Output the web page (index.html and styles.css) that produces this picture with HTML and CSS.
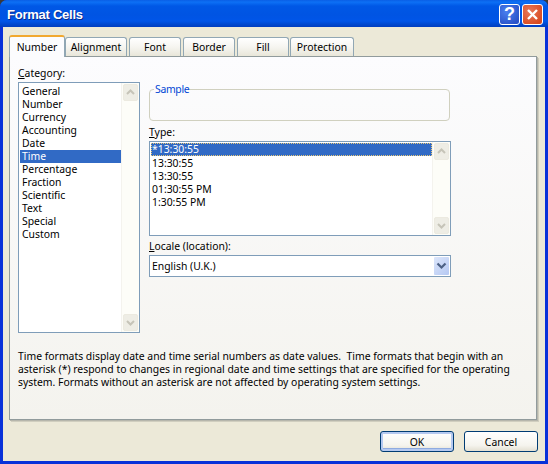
FILE: index.html
```html
<!DOCTYPE html>
<html lang="en">
<head>
<meta charset="utf-8">
<title>Format Cells</title>
<link rel="stylesheet" href="styles.css">
</head>
<body>
<div class="window">
  <header class="titlebar">
    <span class="title">Format Cells</span>
    <div class="caption-buttons">
      <span class="cap cap-help">?</span>
      <span class="cap cap-close"><svg width="13" height="13" viewBox="0 0 13 13"><path d="M2 2l9 9M11 2l-9 9" stroke="#fff" stroke-width="2.4" fill="none"/></svg></span>
    </div>
  </header>
  <div class="client">
    <div class="tabs">
      <span class="tab tab-active tab-number">Number</span>
      <span class="tab tab-alignment">Alignment</span>
      <span class="tab tab-font">Font</span>
      <span class="tab tab-border">Border</span>
      <span class="tab tab-fill">Fill</span>
      <span class="tab tab-protection">Protection</span>
    </div>
    <div class="pane">
      <div class="columns">
        <div class="col-left">
          <div class="label"><u>C</u>ategory:</div>
          <div class="listbox listbox-category">
            <ul class="items">
              <li>General</li><li>Number</li><li>Currency</li><li>Accounting</li><li>Date</li>
              <li class="selected">Time</li>
              <li>Percentage</li><li>Fraction</li><li>Scientific</li><li>Text</li><li>Special</li><li>Custom</li>
            </ul>
            <div class="scrollbar">
              <span class="sb-btn"><svg width="9" height="7" viewBox="0 0 9 7"><path d="M1 5l3.5-3.5L8 5" stroke="#c6c4b8" stroke-width="2" fill="none"/></svg></span>
              <span class="sb-btn"><svg width="9" height="7" viewBox="0 0 9 7"><path d="M1 2l3.5 3.5L8 2" stroke="#c6c4b8" stroke-width="2" fill="none"/></svg></span>
            </div>
          </div>
        </div>
        <div class="col-right">
          <fieldset class="sample"><legend>Sample</legend></fieldset>
          <div class="label label-type"><u>T</u>ype:</div>
          <div class="listbox listbox-type">
            <ul class="items">
              <li class="selected focused">*13:30:55</li>
              <li>13:30:55</li><li>13:30:55</li><li>01:30:55 PM</li><li>1:30:55 PM</li>
            </ul>
            <div class="scrollbar">
              <span class="sb-btn"><svg width="9" height="7" viewBox="0 0 9 7"><path d="M1 5l3.5-3.5L8 5" stroke="#c6c4b8" stroke-width="2" fill="none"/></svg></span>
              <span class="sb-btn"><svg width="9" height="7" viewBox="0 0 9 7"><path d="M1 2l3.5 3.5L8 2" stroke="#c6c4b8" stroke-width="2" fill="none"/></svg></span>
            </div>
          </div>
          <div class="label label-locale"><u>L</u>ocale (location):</div>
          <div class="combo">
            <span class="combo-value">English (U.K.)</span>
            <span class="combo-btn"><svg width="11" height="8" viewBox="0 0 11 8"><path d="M1.5 1.5l4 4 4-4" stroke="#4d6185" stroke-width="2.2" fill="none"/></svg></span>
          </div>
        </div>
      </div>
      <p class="description">Time formats display date and time serial numbers as date values.&nbsp; Time formats that begin with an<br>asterisk (*) respond to changes in regional date and time settings that are specified for the operating<br>system. Formats without an asterisk are not affected by operating system settings.</p>
    </div>
    <div class="actions">
      <button class="btn btn-default">OK</button>
      <button class="btn">Cancel</button>
    </div>
  </div>
</div>
</body>
</html>
```
FILE: styles.css
```css
* { box-sizing: border-box; }
html, body { margin: 0; padding: 0; }
body {
  width: 548px;
  height: 464px;
  overflow: hidden;
  background: #3a3a3a;
  font-family: "Noto Sans", "Liberation Sans", sans-serif;
  font-size: 10.4px;
  color: #000;
}
u { text-decoration: underline; }
.window {
  width: 548px;
  height: 464px;
  display: flex;
  flex-direction: column;
  border-radius: 7px 7px 0 0;
  overflow: hidden;
  background: #0831d9;
}
.titlebar {
  height: 27px;
  flex: none;
  display: flex;
  align-items: center;
  justify-content: space-between;
  padding: 2px 5px 0 7px;
  background: linear-gradient(180deg, #0a5fe6 0%, #0d70f5 8%, #0058e6 22%, #0054e3 55%, #0055e8 78%, #0048cf 90%, #003dc0 100%);
}
.title {
  color: #fff;
  font-family: "Liberation Sans", sans-serif;
  font-weight: bold;
  font-size: 13px;
  letter-spacing: -0.25px;
  text-shadow: 1px 1px 0 #0a2a8c;
}
.caption-buttons { display: flex; gap: 2px; }
.cap {
  width: 21px;
  height: 21px;
  border: 1px solid #fff;
  border-radius: 3px;
  display: flex;
  align-items: center;
  justify-content: center;
  color: #fff;
}
.cap-help {
  background: radial-gradient(circle at 35% 35%, #4a80f0, #2a52c8 80%);
  font: bold 18px "Liberation Sans", sans-serif;
}
.cap-close { background: radial-gradient(circle at 35% 35%, #e8785a, #d84a20 80%); }
.client {
  flex: 1;
  margin: 0 3px 3px;
  background: #ece9d8;
  display: flex;
  flex-direction: column;
  padding: 8px 2px 0 6px;
}
.tabs {
  height: 21px;
  flex: none;
  display: flex;
  align-items: flex-end;
  position: relative;
  z-index: 1;
}
.tab {
  height: 19px;
  margin-right: 2px;
  border: 1px solid #91a7b4;
  border-bottom: none;
  border-radius: 3px 3px 0 0;
  background: linear-gradient(180deg, #fff 0%, #f6f5f0 50%, #e8e6d9 100%);
  display: flex;
  align-items: center;
  justify-content: center;
}
.tab-number { width: 56px; }
.tab-alignment { width: 62px; }
.tab-font { width: 52px; }
.tab-border { width: 52px; }
.tab-fill { width: 52px; }
.tab-protection { width: 64px; margin-right: 0; margin-left: -1px; }
.tab-active {
  margin-right: 0;
  border: 1px solid #91a7b4;
  border-top: 2px solid #f1a82f;
  border-bottom: none;
  background: #fcfcfe;
  margin-bottom: -1px;
  height: 22px;
}
.pane {
  width: 528px;
  height: 364px;
  flex: none;
  border: 1px solid #919b9c;
  box-shadow: 1px 1px 0 #b6b6ac, 2px 2px 0 #d0cebf;
  background: linear-gradient(180deg, #fcfcfe 0%, #f4f3ee 100%);
  padding: 11px 0 0 8px;
  display: flex;
  flex-direction: column;
}
.columns { display: flex; gap: 9px; height: 265px; flex: none; }
.col-left { width: 122px; display: flex; flex-direction: column; }
.col-right { width: 302px; display: flex; flex-direction: column; padding-top: 15px; }
.label { height: 14px; line-height: 10px; }
.listbox {
  display: flex;
  background: #fff;
  border: 1px solid #7f9db9;
  padding: 1px;
}
.listbox-category { height: 251px; }
.listbox-type { width: 302px; height: 95px; }
.items { list-style: none; margin: 0; padding: 0; flex: 1; min-width: 0; }
.items li {
  height: 13px;
  line-height: 13px;
  padding-left: 2px;
  white-space: nowrap;
}
.listbox-category .items { padding-top: 1px; }
.listbox-type .items li { padding-left: 1px; line-height: 15px; }
.items li.selected { background: #316ac5; color: #fff; }
.items li.focused {
  outline: 1px dotted #e8c878;
  outline-offset: -1px;
  line-height: 13px;
}
.scrollbar {
  width: 18px;
  flex: none;
  margin: -1px -1px -1px 0;
  background: #fdfdf8;
  border-left: 1px solid #f4f3ee;
  display: flex;
  flex-direction: column;
  justify-content: space-between;
  padding: 1px;
}
.sb-btn {
  width: 15px;
  height: 17px;
  border: 1px solid #eceae0;
  border-radius: 2px;
  background: #eeede5;
  display: flex;
  align-items: center;
  justify-content: center;
}
.sample {
  width: 301px;
  height: 38px;
  flex: none;
  margin: 0;
  padding: 0 0 0 4px;
  border: 1px solid #d0d0bf;
  border-radius: 4px;
  min-width: 0;
}
.sample legend {
  color: #0046d5;
  padding: 1px 0 0 1px;
  margin: 0;
  line-height: 11px;
  letter-spacing: -0.3px;
}
.label-type { margin-top: 6px; height: 14px; }
.label-locale { margin-top: 5px; height: 14px; }
.combo {
  width: 302px;
  height: 22px;
  flex: none;
  border: 1px solid #7f9db9;
  background: #fff;
  display: flex;
  align-items: center;
  justify-content: space-between;
  padding: 0 1px 0 2px;
}
.combo-btn {
  width: 15px;
  height: 18px;
  background: linear-gradient(135deg, #dce6fb, #b5c8f2);
  border-radius: 1px;
  display: flex;
  align-items: center;
  justify-content: center;
}
.description {
  margin: 17px 0 0;
  line-height: 13px;
  white-space: nowrap;
}
.actions {
  flex: none;
  display: flex;
  justify-content: flex-end;
  gap: 10px;
  padding: 11px 5px 0 0;
}
.btn {
  width: 74px;
  height: 21px;
  padding: 0;
  border: 1px solid #003c74;
  border-radius: 3px;
  background: linear-gradient(180deg, #fff 0%, #f5f4ee 70%, #e3e0d2 100%);
  font: inherit;
  color: #000;
}
.btn-default {
  box-shadow: inset 0 0 0 2px #b5c9f0, inset 0 -2px 0 1px #8fabe0;
}
```
